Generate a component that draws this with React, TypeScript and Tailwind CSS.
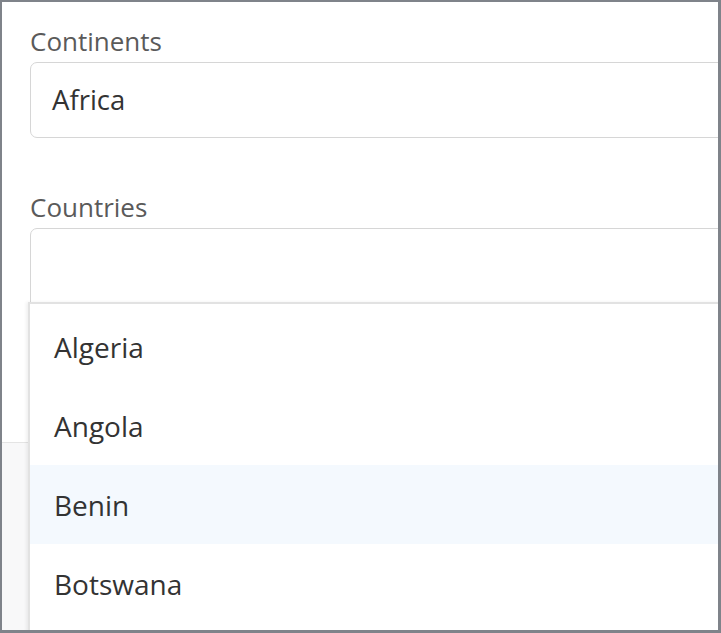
export default function App() {
  const countries = ["Algeria", "Angola", "Benin", "Botswana"];

  return (
    <div
      className="relative w-[721px] h-[633px] overflow-hidden border-t-2 border-l-2 border-r-[3px] border-b-[3px] border-[#7f838a] bg-white"
      style={{ fontFamily: '"Open Sans", "Noto Sans", sans-serif' }}
    >
      <div className="pl-[28px] pt-[23px] w-[900px]">
        <div className="text-[26px] leading-[32px] text-[#5a5a5a]">Continents</div>
        <div className="mt-[5px] h-[76px] rounded-[7px] border-[1.5px] border-[#d6d6d6] flex items-center px-[21px] text-[27.5px] text-[#333]">
          Africa
        </div>
        <div className="mt-[53px] text-[26px] leading-[32px] text-[#5a5a5a]">Countries</div>
        <div className="mt-[5px] h-[76px] rounded-t-[7px] border-[1.5px] border-[#d6d6d6]" />
      </div>
      <div className="mt-[138px] h-[200px] border-t border-[#e4e4e4] bg-[#f8f8f9]" />

      <div className="absolute left-[26px] top-[300px] w-[900px] pt-[3px] border-t-2 border-l-2 border-[#e2e2e2] bg-white shadow-[-2px_0_3px_rgba(0,0,0,0.06)]">
        {countries.map((c) => (
          <div
            key={c}
            className={
              "h-[79px] flex items-center pl-[24px] text-[28px] text-[#333] " +
              (c === "Benin" ? "bg-[#f4f9fe]" : "")
            }
          >
            {c}
          </div>
        ))}
        <div className="h-[20px]" />
      </div>
    </div>
  );
}
